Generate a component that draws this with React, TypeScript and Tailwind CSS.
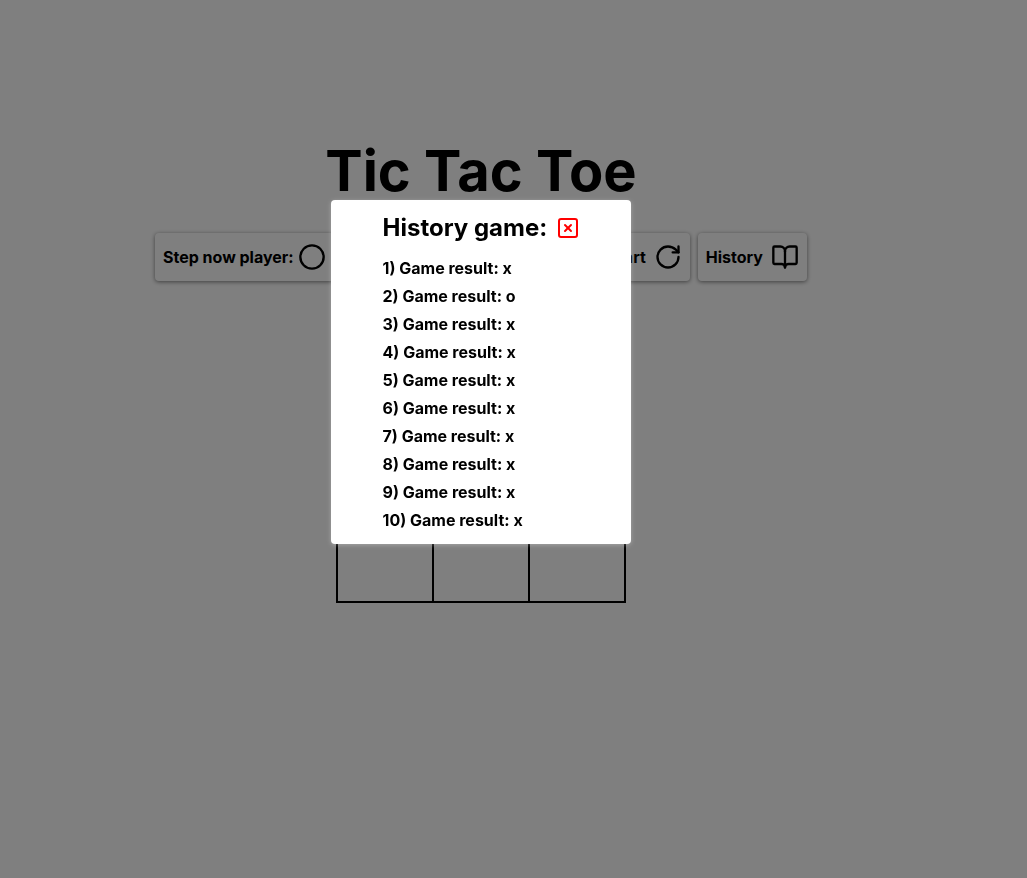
import { useState } from "react";
import { BookOpen, Circle, RotateCw, SquareX } from "lucide-react";

const results = ["x", "o", "x", "x", "x", "x", "x", "x", "x", "x"];

const panel =
  "flex h-12 items-center justify-end rounded-sm bg-white px-2 shadow-[0_1px_4px_rgba(0,0,0,0.5)]";

function HistoryDialog({ onClose }: { onClose: () => void }) {
  return (
    <div className="fixed inset-0 flex items-start justify-center bg-black/50 pt-[200px] pr-[65px]">
      <section
        role="dialog"
        aria-modal="true"
        aria-labelledby="history-title"
        className="flex w-[300px] flex-col items-center rounded-sm bg-white py-3 shadow-[0_1px_4px_rgba(255,255,255,0.3)]"
      >
        <div className="flex w-[197px] flex-col gap-3">
          <header className="flex items-center justify-between">
            <h2 id="history-title" className="text-2xl whitespace-nowrap">
              History game:
            </h2>
            <button type="button" aria-label="Close" onClick={onClose}>
              <SquareX size={24} color="red" />
            </button>
          </header>
          <ul className="flex flex-col gap-1">
            {results.map((result, index) => (
              <li key={index}>
                {index + 1}) Game result: {result}
              </li>
            ))}
          </ul>
        </div>
      </section>
    </div>
  );
}

export default function App() {
  const [historyOpen, setHistoryOpen] = useState(true);

  return (
    <div className="min-h-screen bg-white font-['Inter',sans-serif] font-bold text-black">
      <main className="flex flex-col items-center pt-[141px] pr-[65px]">
        <h1 className="text-[56px] leading-[60px]">Tic Tac Toe</h1>
        <div className="mt-8 flex w-full max-w-[652px] justify-between">
          <div className={`${panel} gap-1`}>
            <span>Step now player:</span>
            <Circle size={28} />
          </div>
          <div className="flex gap-2">
            <button type="button" className={`${panel} min-w-28 gap-2`}>
              Restart
              <RotateCw size={28} />
            </button>
            <button
              type="button"
              className={`${panel} gap-2`}
              onClick={() => setHistoryOpen(true)}
            >
              History
              <BookOpen size={28} />
            </button>
          </div>
        </div>
        <div className="mt-8 grid grid-cols-3 gap-0.5 bg-black p-0.5">
          {Array.from({ length: 9 }, (_, index) => (
            <button
              key={index}
              type="button"
              aria-label={`Cell ${index + 1}`}
              className="size-[94px] bg-white"
            />
          ))}
        </div>
      </main>
      {historyOpen && <HistoryDialog onClose={() => setHistoryOpen(false)} />}
    </div>
  );
}
